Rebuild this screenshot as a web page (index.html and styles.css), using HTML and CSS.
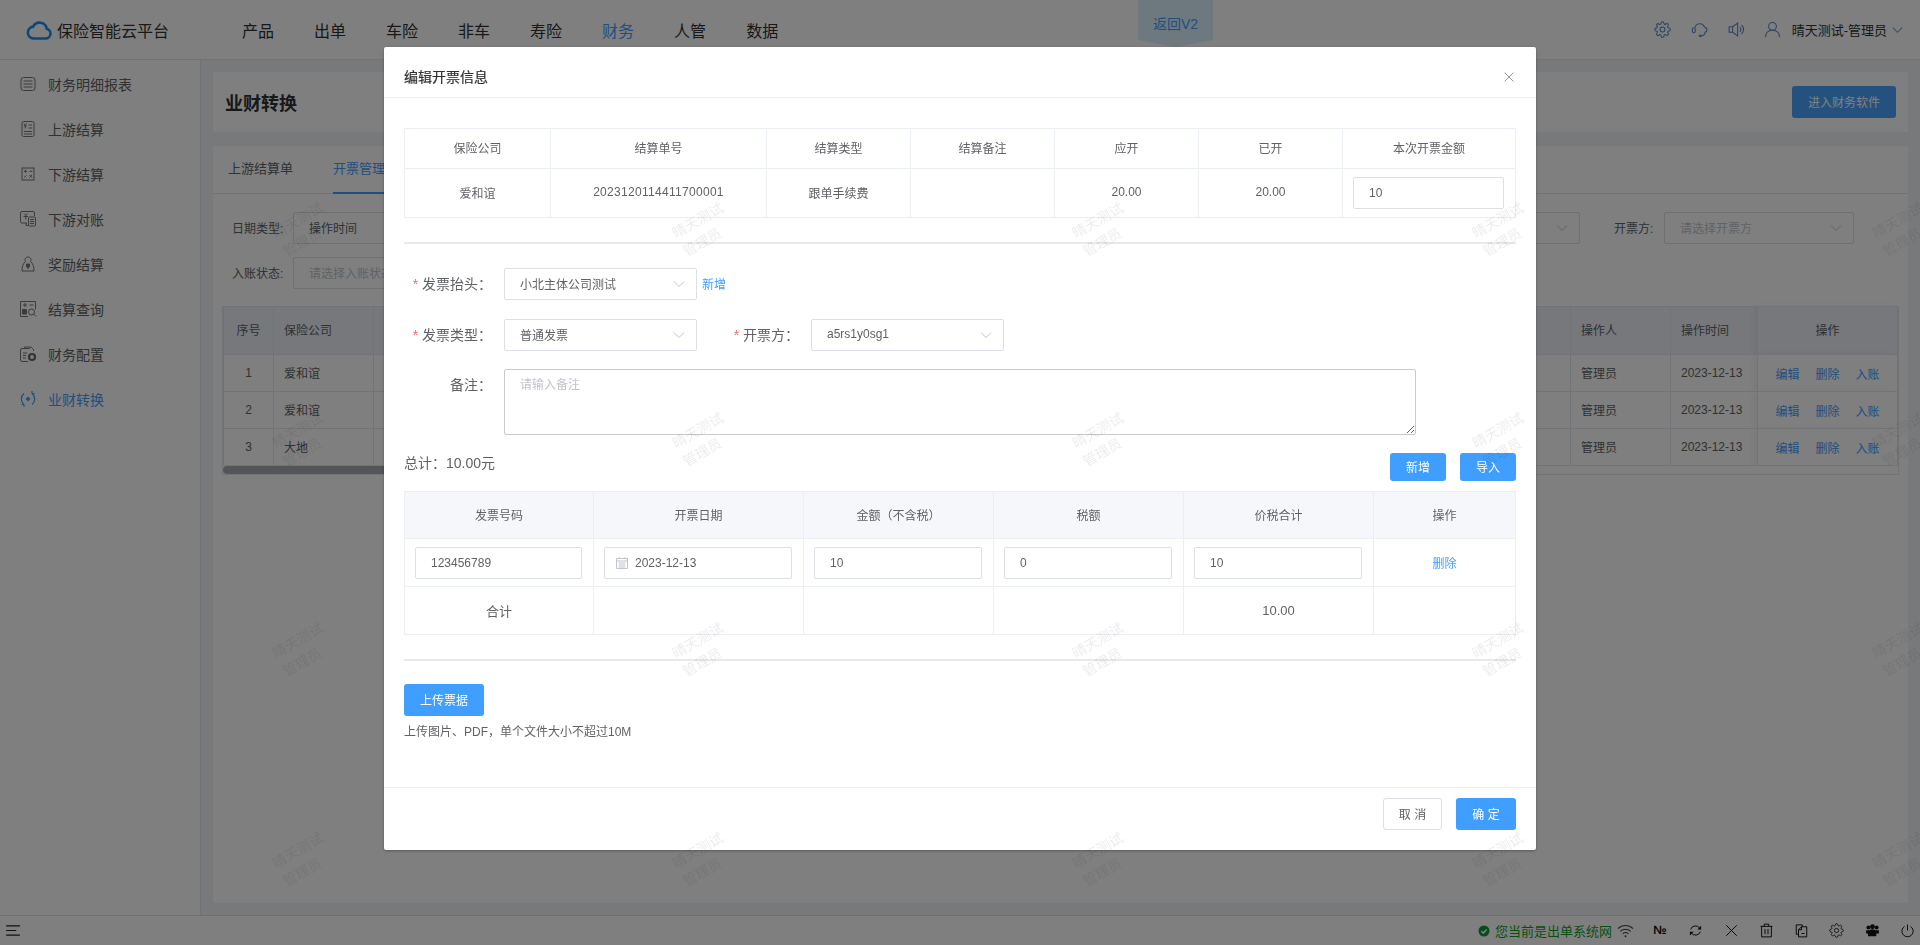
FILE: index.html
```html
<!DOCTYPE html>
<html lang="zh-CN">
<head>
<meta charset="utf-8">
<title>业财转换</title>
<link rel="stylesheet" href="styles.css">
</head>
<body>
<svg class="defs" width="0" height="0" aria-hidden="true">
  <symbol id="gear" viewBox="0 0 24 24">
    <circle cx="12" cy="12" r="3.4"/>
    <path d="M19.4 15a1.65 1.65 0 0 0 .33 1.82l.06.06a2 2 0 0 1 0 2.83 2 2 0 0 1-2.83 0l-.06-.06a1.65 1.65 0 0 0-1.82-.33 1.65 1.65 0 0 0-1 1.51V21a2 2 0 0 1-2 2 2 2 0 0 1-2-2v-.09A1.65 1.65 0 0 0 9 19.4a1.65 1.65 0 0 0-1.82.33l-.06.06a2 2 0 0 1-2.83 0 2 2 0 0 1 0-2.83l.06-.06a1.65 1.65 0 0 0 .33-1.82 1.65 1.65 0 0 0-1.51-1H3a2 2 0 0 1-2-2 2 2 0 0 1 2-2h.09A1.65 1.65 0 0 0 4.6 9a1.65 1.65 0 0 0-.33-1.82l-.06-.06a2 2 0 0 1 0-2.83 2 2 0 0 1 2.83 0l.06.06a1.65 1.65 0 0 0 1.82.33H9a1.65 1.65 0 0 0 1-1.51V3a2 2 0 0 1 2-2 2 2 0 0 1 2 2v.09a1.65 1.65 0 0 0 1 1.51 1.65 1.65 0 0 0 1.82-.33l.06-.06a2 2 0 0 1 2.83 0 2 2 0 0 1 0 2.83l-.06.06a1.65 1.65 0 0 0-.33 1.82V9a1.65 1.65 0 0 0 1.51 1H21a2 2 0 0 1 2 2 2 2 0 0 1-2 2h-.09a1.65 1.65 0 0 0-1.51 1z"/>
  </symbol>
  <symbol id="chev" viewBox="0 0 12 8"><path d="M1 1.5l5 5 5-5"/></symbol>
</svg>

<div class="app">
  <header class="topbar">
    <div class="brand">
      <svg class="brand-logo" viewBox="0 0 26 20"><path d="M7 18.5h12.5a5 5 0 0 0 1.2-9.85A7.2 7.2 0 0 0 7.2 6.6 6 6 0 0 0 7 18.5z"/></svg>
      <span>保险智能云平台</span>
    </div>
    <nav class="mainnav">
      <a>产品</a><a>出单</a><a>车险</a><a>非车</a><a>寿险</a><a class="on">财务</a><a>人管</a><a>数据</a>
    </nav>
    <div class="v2tab">返回V2</div>
    <div class="toolset">
      <svg class="tool" viewBox="0 0 24 24"><use href="#gear"/></svg>
      <svg class="tool" viewBox="0 0 24 24"><path d="M5.500 9.500a7 7 0 0 1 13.500-1M20 16a5 5 0 0 1-5.500 5"/><rect x="2" y="9.500" width="4" height="7" rx="2"/><path d="M19 9a3.500 3.500 0 0 1 0 7"/><circle cx="13" cy="21" r="1.300"/></svg>
      <svg class="tool" viewBox="0 0 24 24"><path d="M3 8h5l7-5v18l-7-5H3zM8 8v8M18 8.500a5 5 0 0 1 0 7M20.500 5.500a9 9 0 0 1 0 13"/></svg>
      <svg class="tool" viewBox="0 0 24 24"><circle cx="12" cy="7.500" r="5.500"/><path d="M2 23c0-6 4-10 10-10s10 4 10 10"/></svg>
      <span class="uname">晴天测试-管理员</span>
      <svg class="uchev"><use href="#chev"/></svg>
    </div>
  </header>

  <div class="middle">
    <aside class="sidebar">
      <a class="side-item"><svg viewBox="0 0 18 18"><rect x="2" y="2.500" width="14" height="13" rx="2.500"/><path d="M4.500 6h9M4.500 9h9M4.500 12h9"/></svg>财务明细报表</a>
      <a class="side-item"><svg viewBox="0 0 18 18"><rect x="3" y="1.500" width="12" height="15" rx="1.500"/><path d="M9.500 5h3.500M9.500 8h3.500M5 11.500h8M5 14h8M5 3.500l1.300 1.800L7.600 3.500M4.800 6h3M6.300 5.300V8.500"/></svg>上游结算</a>
      <a class="side-item"><svg viewBox="0 0 18 18"><rect x="3" y="3" width="12" height="12"/><path d="M5 6.300h3M6.500 4.800v3M10.300 6.300h3M5 12.500l2.500-2M10.500 10l2.500 2.500M13 10l-2.500 2.500"/></svg>下游结算</a>
      <a class="side-item"><svg viewBox="0 0 18 18"><path d="M8 13H3a1.500 1.500 0 0 1-1.500-1.500V3A1.500 1.500 0 0 1 3 1.500h11A1.500 1.500 0 0 1 15.500 3v3M5 3.500l1.800 2 1.800-2M4.500 6.500h4.500M6.800 5.500v4M7 13v2.500h2"/><rect x="9.500" y="7" width="7" height="9" rx="1"/><path d="M11 9.500h4M11 11.500h4M11 13.500h4"/></svg>下游对账</a>
      <a class="side-item"><svg viewBox="0 0 18 18"><path d="M6.500 6.500C5.500 5 6 2 9 2s3.500 3 2.500 4.500c2.500 2 3.500 5 3.500 9.500H3c0-4.500 1-7.500 3.500-9.500z"/><path class="fill" d="M7.500 9h3v2.500l-1.500 2-1.500-2z"/></svg>奖励结算</a>
      <a class="side-item"><svg viewBox="0 0 18 18"><path d="M9 16.500H1.500v-15h15v8"/><path d="M4 5h4M6 3v4M10.500 5h4"/><path class="fill" d="M3.500 9.500h4v4.500h-4z"/><circle cx="12.500" cy="12" r="3"/><path d="M14.700 14.200l2.300 2.300"/></svg>结算查询</a>
      <a class="side-item"><svg viewBox="0 0 18 18"><path d="M9 16.500H3A1.500 1.500 0 0 1 1.500 15V5A1.500 1.500 0 0 1 3 3.500h8M5.500 3.500V2h6.500l2.500 2.500V6M4 8h4M4 10.500h3M4 13h3"/><circle class="thick" cx="13" cy="12" r="3"/></svg>财务配置</a>
      <a class="side-item side-on"><svg viewBox="0 0 18 18"><path d="M5 3.500a7 7 0 0 0 0 11M5 14.500H2.500M5 14.500v2.500M13 14.500a7 7 0 0 0 0-11M13 3.500h2.500M13 3.500V1"/><path class="fill" d="M9 6.500l2.500 2.500L9 11.500 6.500 9z"/></svg>业财转换</a>
    </aside>

    <main class="content">
      <section class="card page-head">
        <h1>业财转换</h1>
        <button class="btn btn-primary btn-soft">进入财务软件</button>
      </section>

      <section class="card page-body">
        <div class="tabs"><a>上游结算单</a><a class="tab-on">开票管理</a></div>
        <div class="filter-row">
          <label>日期类型:</label>
          <div class="select fsel"><span>操作时间</span><svg class="chev"><use href="#chev"/></svg></div>
          <div class="filter-right">
            <div class="select fsel"><span class="ph">请选择</span><svg class="chev"><use href="#chev"/></svg></div>
            <label class="inline-label">开票方:</label>
            <div class="select fsel"><span class="ph">请选择开票方</span><svg class="chev"><use href="#chev"/></svg></div>
          </div>
        </div>
        <div class="filter-row">
          <label>入账状态:</label>
          <div class="select fsel"><span class="ph">请选择入账状态</span><svg class="chev"><use href="#chev"/></svg></div>
        </div>

        <div class="grid-wrap">
          <table class="grid">
            <colgroup><col class="g1"><col class="g2"><col><col class="g2"><col class="g5"><col class="g6"></colgroup>
            <thead><tr><th class="c">序号</th><th>保险公司</th><th></th><th>操作人</th><th>操作时间</th><th class="c fixed">操作</th></tr></thead>
            <tbody>
              <tr><td class="c">1</td><td>爱和谊</td><td></td><td>管理员</td><td>2023-12-13</td><td class="c fixed"><span class="acts"><a>编辑</a><a>删除</a><a>入账</a></span></td></tr>
              <tr><td class="c">2</td><td>爱和谊</td><td></td><td>管理员</td><td>2023-12-13</td><td class="c fixed"><span class="acts"><a>编辑</a><a>删除</a><a>入账</a></span></td></tr>
              <tr><td class="c">3</td><td>大地</td><td></td><td>管理员</td><td>2023-12-13</td><td class="c fixed"><span class="acts"><a>编辑</a><a>删除</a><a>入账</a></span></td></tr>
            </tbody>
          </table>
          <div class="hscroll"><div class="thumb"></div></div>
        </div>
      </section>
    </main>
  </div>

  <footer class="statusbar">
    <svg class="menu-ico" viewBox="0 0 16 12"><path d="M0 1h15M0 6h11M0 11h15"/></svg>
    <div class="status-right">
      <svg class="ok-ico" viewBox="0 0 12 12"><circle cx="6" cy="6" r="5.500"/><path d="M3.300 6.200l2 1.900 3.400-3.700"/></svg>
      <span class="net">您当前是出单系统网</span>
      <svg class="wifi" viewBox="0 0 18 14"><path d="M1 4.500a11.500 11.500 0 0 1 16 0M3.500 7.300a8 8 0 0 1 11 0M6 10a4.500 4.500 0 0 1 6 0"/><circle class="dot" cx="9" cy="12.500" r="1"/></svg>
      <span class="st st-no">№</span>
      <svg class="st" viewBox="0 0 20 20"><path d="M3.500 8.500a6.800 6.800 0 0 1 12.200-1.500M16.500 11.500a6.800 6.800 0 0 1-12.200 1.500"/><path class="dot" d="M17.500 3.500v5h-5zM2.500 16.500v-5h5z"/></svg>
      <svg class="st" viewBox="0 0 20 20"><path d="M3 3l14 14M17 3L3 17"/></svg>
      <svg class="st" viewBox="0 0 20 20"><path d="M2 4.500h16M7 4.500V1.500h6v3M3.500 4.500v14h13v-14M8 8v7M12 8v7"/></svg>
      <svg class="st" viewBox="0 0 20 20"><path d="M6 15H3V2.500h8V5"/><path d="M10 5H17v13.500H6V9zM10 5v4H6M10 14h4"/></svg>
      <svg class="st" viewBox="0 0 24 24"><use href="#gear"/></svg>
      <svg class="st" viewBox="0 0 20 20"><g class="dot"><circle cx="4.500" cy="6" r="2.600"/><circle cx="15.500" cy="6" r="2.600"/><circle cx="10" cy="5" r="3.200"/><path d="M1.500 9.500h5l1 -1h5l1 1h5V14h-3.500v3.500h-11V14H1.500z"/></g></svg>
      <svg class="st" viewBox="0 0 20 20"><path d="M10 2v8M6 4.500a7.500 7.500 0 1 0 8 0"/></svg>
    </div>
  </footer>
</div>

<div class="mask">
  <div class="dialog">
    <div class="dlg-head">
      <span class="dlg-title">编辑开票信息</span>
      <svg class="dlg-close" viewBox="0 0 10 10"><path d="M.7.7l8.600 8.600M9.300.7L.7 9.300"/></svg>
    </div>
    <div class="dlg-body">
      <table class="tb tb-top">
        <colgroup><col class="t1"><col class="t2"><col class="t3"><col class="t3"><col class="t3"><col class="t3"><col class="t7"></colgroup>
        <thead><tr><th>保险公司</th><th>结算单号</th><th>结算类型</th><th>结算备注</th><th>应开</th><th>已开</th><th>本次开票金额</th></tr></thead>
        <tbody><tr><td>爱和谊</td><td class="long-no">2023120114411700001</td><td>跟单手续费</td><td></td><td>20.00</td><td>20.00</td><td class="pad"><input class="inp" value="10"></td></tr></tbody>
      </table>
      <hr class="rule rule-a">

      <div class="form-row">
        <label class="flabel"><i>*</i> 发票抬头：</label>
        <div class="select msel"><span>小北主体公司测试</span><svg class="chev"><use href="#chev"/></svg></div>
        <a class="link add-link">新增</a>
      </div>
      <div class="form-row">
        <label class="flabel"><i>*</i> 发票类型：</label>
        <div class="select msel"><span>普通发票</span><svg class="chev"><use href="#chev"/></svg></div>
        <label class="flabel flabel-2"><i>*</i> 开票方：</label>
        <div class="select msel"><span>a5rs1y0sg1</span><svg class="chev"><use href="#chev"/></svg></div>
      </div>
      <div class="form-row form-note">
        <label class="flabel">备注：</label>
        <textarea class="note" placeholder="请输入备注"></textarea>
      </div>

      <div class="sum-row">
        <span class="sum">总计：10.00元</span>
        <div class="sum-btns"><button class="btn btn-primary btn-s">新增</button><button class="btn btn-primary btn-s">导入</button></div>
      </div>

      <div class="inv-wrap">
        <table class="tb tb-inv">
          <colgroup><col class="i0"><col class="i2"><col class="i1"><col class="i1"><col class="i1"><col class="i6"></colgroup>
          <thead><tr><th>发票号码</th><th>开票日期</th><th>金额（不含税）</th><th>税额</th><th>价税合计</th><th>操作</th></tr></thead>
          <tbody>
            <tr>
              <td class="pad"><input class="inp" value="123456789"></td>
              <td class="pad"><div class="date-inp"><svg viewBox="0 0 12 12"><path d="M.5 1.500h11v10H.5zM.5 4h11M3 .3v2M9 .3v2M2.500 6h7M2.500 8h7M2.500 10h7"/></svg><input value="2023-12-13"></div></td>
              <td class="pad"><input class="inp" value="10"></td>
              <td class="pad"><input class="inp" value="0"></td>
              <td class="pad"><input class="inp" value="10"></td>
              <td><a class="link">删除</a></td>
            </tr>
            <tr class="tot"><td>合计</td><td></td><td></td><td></td><td>10.00</td><td></td></tr>
          </tbody>
        </table>
      </div>
      <hr class="rule rule-b">

      <button class="btn btn-primary btn-up">上传票据</button>
      <p class="tip">上传图片、PDF，单个文件大小不超过10M</p>
    </div>
    <div class="dlg-foot">
      <button class="btn btn-plain">取 消</button>
      <button class="btn btn-primary btn-ok">确 定</button>
    </div>
  </div>
</div>

<div class="watermarks" aria-hidden="true">
  <div class="wm"><span>晴天测试<br>管理员</span></div><div class="wm"><span>晴天测试<br>管理员</span></div><div class="wm"><span>晴天测试<br>管理员</span></div><div class="wm"><span>晴天测试<br>管理员</span></div><div class="wm"><span>晴天测试<br>管理员</span></div>
  <div class="wm"><span>晴天测试<br>管理员</span></div><div class="wm"><span>晴天测试<br>管理员</span></div><div class="wm"><span>晴天测试<br>管理员</span></div><div class="wm"><span>晴天测试<br>管理员</span></div><div class="wm"><span>晴天测试<br>管理员</span></div>
  <div class="wm"><span>晴天测试<br>管理员</span></div><div class="wm"><span>晴天测试<br>管理员</span></div><div class="wm"><span>晴天测试<br>管理员</span></div><div class="wm"><span>晴天测试<br>管理员</span></div><div class="wm"><span>晴天测试<br>管理员</span></div>
  <div class="wm"><span>晴天测试<br>管理员</span></div><div class="wm"><span>晴天测试<br>管理员</span></div><div class="wm"><span>晴天测试<br>管理员</span></div><div class="wm"><span>晴天测试<br>管理员</span></div><div class="wm"><span>晴天测试<br>管理员</span></div>
</div>
</body>
</html>
```

FILE: styles.css
```css
* { box-sizing: border-box; }
html, body { margin: 0; height: 100%; overflow: hidden; }
body {
  font-family: "Liberation Sans", "Noto Sans CJK SC", sans-serif;
  font-size: 12px;
  color: #606266;
  background: #fff;
}
.defs { position: absolute; }
a { cursor: pointer; }
button { font-family: inherit; cursor: pointer; }

.app { display: flex; flex-direction: column; height: 945px; }

/* top bar */
.topbar {
  position: relative;
  flex: none;
  height: 60px;
  display: flex;
  align-items: center;
  background: #fff;
  border-bottom: 1px solid #e4e7ed;
}
.brand { display: flex; align-items: center; gap: 5px; padding-left: 26px; font-size: 16px; color: #333; }
.brand-logo { width: 26px; height: 20px; fill: none; stroke: #1a8ef0; stroke-width: 2.6; }
.mainnav { display: flex; gap: 40px; margin-left: 73px; font-size: 16px; color: #303133; }
.mainnav .on { color: #409eff; }
.v2tab {
  position: absolute;
  left: 1138px;
  top: 0;
  width: 75px;
  height: 47px;
  padding-top: 15px;
  text-align: center;
  font-size: 14px;
  line-height: 18px;
  color: #409eff;
  background: #dcf3ff;
  clip-path: polygon(0 0, 100% 0, 100% 40px, 50% 47px, 0 40px);
}
.toolset { margin-left: auto; display: flex; align-items: center; padding-right: 17px; }
.tool { width: 17px; height: 17px; margin-right: 19.500px; fill: none; stroke: #5a85cc; stroke-width: 1.500; }
.tool:nth-child(4) { margin-right: 11px; }
.uname { font-size: 13px; color: #303133; }
.uchev { width: 11px; height: 8px; margin-left: 5px; fill: none; stroke: #6f9ad8; stroke-width: 1.200; }

/* layout */
.middle { flex: 1; display: flex; min-height: 0; }
.sidebar { flex: none; width: 201px; padding-top: 1px; background: #fff; border-right: 1px solid #e4e7ed; }
.side-item { display: flex; align-items: center; height: 45px; padding-left: 19px; font-size: 14px; color: #606266; }
.side-item svg { flex: none; width: 18px; height: 18px; margin-right: 11px; fill: none; stroke: #777; stroke-width: 1; }
.side-item svg .fill { fill: #777; }
.side-item svg .thick { stroke-width: 2.200; stroke: #666; fill: #fff; }
.side-on { color: #409eff; }
.side-on svg { stroke: #409eff; stroke-width: 1.200; }
.side-on svg .fill { fill: #409eff; stroke: none; }

.content { flex: 1; min-width: 0; padding: 12px; background: #f0f2f5; display: flex; flex-direction: column; gap: 14px; }
.card { background: #fff; }
.page-head { flex: none; height: 60px; display: flex; align-items: center; justify-content: space-between; padding: 0 12px; }
.page-head h1 { margin: 0; font-size: 18px; font-weight: 700; color: #303133; }
.page-body { flex: 1; padding: 0 9px; }

.btn { display: block; border: 1px solid transparent; border-radius: 3px; font-size: 12px; padding: 0 0 2px; }
.btn-primary { background: #409eff; color: #fff; }
.btn-soft { width: 104px; height: 32px; background: #4aa3ff; }

.tabs { display: flex; gap: 40px; height: 48px; margin: 0 -9px; padding-left: 15px; border-bottom: 1px solid #e4e7ed; font-size: 13px; line-height: 46px; color: #606266; }
.tabs a { height: 48px; }
.tab-on { color: #409eff; border-bottom: 2px solid #409eff; }

.filter-row { display: flex; align-items: center; margin-top: 13px; padding-left: 10px; }
.tabs + .filter-row { margin-top: 18px; }
.filter-row label { width: 61px; flex: none; font-size: 12px; color: #606266; padding-bottom: 2px; }
.filter-row .inline-label { width: 50px; margin-left: 34px; }
.filter-right { margin-left: auto; padding-right: 45px; display: flex; align-items: center; }
.select {
  display: flex;
  align-items: center;
  justify-content: space-between;
  height: 32px;
  padding: 0 11px 0 15px;
  background: #fff;
  border: 1px solid #dcdfe6;
  border-radius: 2px;
  color: #606266;
  font-size: 12px;
}
.select span { margin-bottom: 2px; }
.ph { color: #c0c4cc; }
.chev { flex: none; width: 12px; height: 8px; fill: none; stroke: #c0c4cc; stroke-width: 1; }
.fsel { width: 190px; }

.grid-wrap { margin-top: 17px; border-left: 1px solid #e4e7ed; border-right: 1px solid #e4e7ed; border-bottom: 1px solid #e4e7ed; }
.grid { width: 100%; table-layout: fixed; border-collapse: collapse; font-size: 12px; color: #606266; }
.g1 { width: 50px; }
.g2 { width: 100px; }
.g5 { width: 87px; }
.g6 { width: 140px; }
.grid th { height: 48px; padding: 0 10px 2px; text-align: left; font-weight: 400; background: #eef1f6; border: 1px solid #e4e7ed; }
.grid td { height: 37px; padding: 0 10px 1px; border: 1px solid #e4e7ed; background: #fff; }
.grid .c { text-align: center; }
.grid .fixed { box-shadow: -4px 0 8px rgba(0, 0, 0, .06); }
.acts { display: flex; justify-content: center; gap: 16px; color: #409eff; padding-top: 1px; }
.hscroll { height: 8px; background: #fff; }
.thumb { width: 1000px; height: 8px; border-radius: 4px; background: #a8abb0; }

/* status bar */
.statusbar {
  flex: none;
  height: 30px;
  display: flex;
  align-items: center;
  justify-content: space-between;
  padding: 0 5px 0 6px;
  background: #fff;
  border-top: 1px solid #dcdfe6;
}
.menu-ico { width: 15px; height: 11px; fill: none; stroke: #222; stroke-width: 1.200; }
.status-right { display: flex; align-items: center; }
.ok-ico { width: 12px; height: 12px; margin-right: 5px; fill: #0c9a3c; stroke: none; }
.ok-ico path { fill: none; stroke: #fff; stroke-width: 1.500; }
.net { font-size: 13px; color: #0f9f1f; }
.wifi { width: 17px; height: 14px; margin-left: 5px; margin-right: 18px; fill: none; stroke: #444; stroke-width: 1.100; }
.wifi .dot { fill: #444; stroke: none; }
.st { flex: none; width: 15px; height: 15px; margin-left: 20.300px; fill: none; stroke: #111; stroke-width: 1.300; }
.wifi + .st { margin-left: 0; }
.st .dot { fill: #111; stroke: none; }
.st-no { width: 16px; font-size: 12px; font-weight: 700; line-height: 15px; text-align: center; color: #111; }

/* dialog */
.mask {
  position: fixed;
  inset: 0;
  display: flex;
  justify-content: center;
  align-items: flex-start;
  padding-top: 47px;
  background: rgba(0, 0, 0, .5);
}
.dialog {
  width: 1152px;
  height: 803px;
  display: flex;
  flex-direction: column;
  background: #fff;
  border-radius: 2px;
  box-shadow: 0 1px 3px rgba(0, 0, 0, .3);
}
.dlg-head {
  flex: none;
  height: 51px;
  padding: 8px 20px 0;
  display: flex;
  align-items: center;
  justify-content: space-between;
  border-bottom: 1px solid #ebeef5;
}
.dlg-title { font-size: 14px; font-weight: 400; color: #303133; -webkit-text-stroke: .2px #303133; }
.dlg-close { width: 10px; height: 10px; margin-right: 2px; margin-top: 2px; fill: none; stroke: #909399; stroke-width: 1; }
.dlg-body { flex: 1; padding: 30px 20px 0; min-height: 0; }

.tb { table-layout: fixed; border-collapse: collapse; font-size: 12px; color: #606266; }
.tb-top { width: 1111px; }
.tb th, .tb td { text-align: center; font-weight: 400; border: 1px solid #ebeef5; padding: 0 0 2px; }
.tb-top th { height: 40px; }
.tb-top td { height: 49px; }
.t1 { width: 146px; }
.t2 { width: 216px; }
.t3 { width: 144px; }
.t7 { width: 173px; }
.tb .pad { padding: 0 11px 0 10px; }
.long-no { letter-spacing: .3px; }

.inp {
  display: block;
  width: 100%;
  height: 32px;
  padding: 0 15px;
  border: 1px solid #dcdfe6;
  border-radius: 2px;
  font: inherit;
  color: #606266;
  outline: none;
}
.date-inp {
  display: flex;
  align-items: center;
  height: 32px;
  padding-left: 11px;
  border: 1px solid #dcdfe6;
  border-radius: 2px;
}
.date-inp svg { flex: none; width: 12px; height: 12px; margin-right: 7px; fill: none; stroke: #c0c4cc; stroke-width: 1; }
.date-inp input { flex: 1; min-width: 0; border: 0; padding: 0; font: inherit; color: #606266; outline: none; }

.rule { height: 2px; margin: 0; border: 0; background: #e8e9ee; }
.rule-a { margin-top: 24px; }
.rule-b { margin-top: 24px; }

.form-row { display: flex; align-items: center; margin-top: 19px; }
.rule-a + .form-row { margin-top: 24px; }
.flabel { flex: none; width: 100px; padding: 0 12px 3px 0; text-align: right; font-size: 14px; color: #606266; white-space: nowrap; }
.flabel i { font-style: normal; color: #f56c6c; }
.flabel-2 { margin-left: 14px; }
.msel { width: 193px; }
.add-link { margin: 0 0 2px 5px; }
.link { color: #409eff; font-size: 12px; }
.form-note { align-items: flex-start; margin-top: 18px; }
.form-note .flabel { padding-top: 5px; }
.note {
  display: block;
  width: 912px;
  height: 66px;
  padding: 5px 15px;
  border: 1px solid #c8cad0;
  border-radius: 2px;
  font: inherit;
  color: #606266;
  outline: none;
}
.note::placeholder { color: #c0c4cc; }

.sum-row { display: flex; align-items: flex-start; justify-content: space-between; margin-top: 18px; height: 38px; }
.sum { font-size: 14px; line-height: 20px; }
.sum-btns { display: flex; gap: 14px; }
.btn-s { width: 56px; height: 28px; }

.inv-wrap { width: 1112px; border-right: 1px solid #ebeef5; }
.tb-inv { width: 1111px; }
.i0 { width: 189px; }
.i1 { width: 190px; }
.i2 { width: 210px; }
.i6 { width: 142px; }
.tb-inv th { height: 47px; background: #f5f7fa; }
.tb-inv td { height: 48px; padding-bottom: 0; }
.tot td { font-size: 13px; }

.btn-up { width: 80px; height: 32px; margin-top: 23px; }
.tip { margin: 6px 0 0; font-size: 12px; line-height: 20px; color: #606266; }

.dlg-foot {
  flex: none;
  height: 63px;
  padding: 10px 20px 20px;
  display: flex;
  justify-content: flex-end;
  gap: 14px;
  border-top: 1px solid #ebeef5;
}
.btn-plain { width: 59px; height: 32px; background: #fff; border-color: #dcdfe6; color: #606266; }
.btn-ok { width: 60px; height: 32px; }

/* watermark layer */
.watermarks {
  position: fixed;
  left: 105px;
  top: 124px;
  width: 2000px;
  display: grid;
  grid-template-columns: repeat(5, 400px);
  grid-auto-rows: 210px;
  pointer-events: none;
}
.wm { display: flex; align-items: center; justify-content: center; }
.wm span {
  display: block;
  width: 60px;
  transform: rotate(-30deg);
  font-size: 14px;
  line-height: 21px;
  color: rgba(0, 0, 0, .08);
  white-space: nowrap;
}
```
